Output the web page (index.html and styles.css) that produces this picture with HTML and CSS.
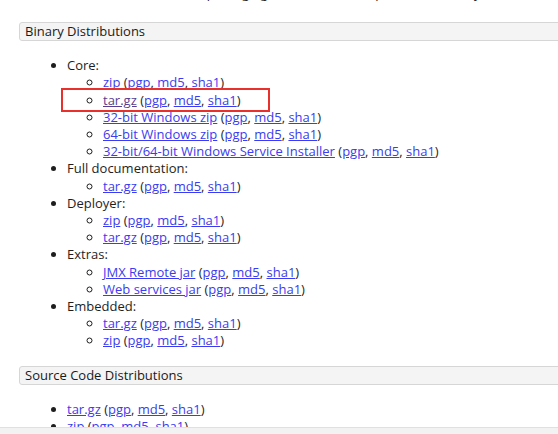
FILE: index.html
```html
<!DOCTYPE html>
<html>
<head>
<meta charset="utf-8">
<link rel="stylesheet" href="styles.css">
</head>
<body>
<div class="page">
  <p class="intro">Please see the <a href="#">README</a> file for packaging information. It explains what every distribution contains.</p>

  <h3 class="section-title">Binary Distributions</h3>
  <ul class="dist">
    <li>Core:
      <ul>
        <li><a href="#">zip</a> (<a href="#">pgp</a>, <a href="#">md5</a>, <a href="#">sha1</a>)</li>
        <li><a href="#" class="visited">tar.gz</a> (<a href="#">pgp</a>, <a href="#">md5</a>, <a href="#">sha1</a>)</li>
        <li><a href="#">32-bit Windows zip</a> (<a href="#">pgp</a>, <a href="#">md5</a>, <a href="#">sha1</a>)</li>
        <li><a href="#">64-bit Windows zip</a> (<a href="#">pgp</a>, <a href="#">md5</a>, <a href="#">sha1</a>)</li>
        <li><a href="#">32-bit/64-bit Windows Service Installer</a> (<a href="#">pgp</a>, <a href="#">md5</a>, <a href="#">sha1</a>)</li>
      </ul>
    </li>
    <li>Full documentation:
      <ul>
        <li><a href="#">tar.gz</a> (<a href="#">pgp</a>, <a href="#">md5</a>, <a href="#">sha1</a>)</li>
      </ul>
    </li>
    <li>Deployer:
      <ul>
        <li><a href="#">zip</a> (<a href="#">pgp</a>, <a href="#">md5</a>, <a href="#">sha1</a>)</li>
        <li><a href="#">tar.gz</a> (<a href="#">pgp</a>, <a href="#">md5</a>, <a href="#">sha1</a>)</li>
      </ul>
    </li>
    <li>Extras:
      <ul>
        <li><a href="#">JMX Remote jar</a> (<a href="#">pgp</a>, <a href="#">md5</a>, <a href="#">sha1</a>)</li>
        <li><a href="#">Web services jar</a> (<a href="#">pgp</a>, <a href="#">md5</a>, <a href="#">sha1</a>)</li>
      </ul>
    </li>
    <li>Embedded:
      <ul>
        <li><a href="#">tar.gz</a> (<a href="#">pgp</a>, <a href="#">md5</a>, <a href="#">sha1</a>)</li>
        <li><a href="#">zip</a> (<a href="#">pgp</a>, <a href="#">md5</a>, <a href="#">sha1</a>)</li>
      </ul>
    </li>
  </ul>

  <h3 class="section-title">Source Code Distributions</h3>
  <ul class="dist">
    <li><a href="#">tar.gz</a> (<a href="#">pgp</a>, <a href="#">md5</a>, <a href="#">sha1</a>)</li>
    <li><a href="#">zip</a> (<a href="#">pgp</a>, <a href="#">md5</a>, <a href="#">sha1</a>)</li>
  </ul>

  <div class="highlight"></div>
</div>
<div class="bottom-bar"></div>
</body>
</html>
```

FILE: styles.css
```css
html, body {
  margin: 0;
  padding: 0;
  background: #ffffff;
  overflow: hidden;
}

body {
  font-family: "Open Sans", "Liberation Sans", sans-serif;
  font-size: 13px;
  line-height: 17.2px;
  color: #1e1e1e;
}

.page {
  position: relative;
  display: flow-root;
}

a {
  color: #3b3bef;
  text-decoration: underline;
}

a.visited {
  color: #5b3d8f;
}

.intro {
  margin: -15px 0 0 19px;
  white-space: nowrap;
}

.section-title {
  margin: 20px -40px 0 19px;
  padding: 0 0 0 5px;
  height: 17px;
  line-height: 17px;
  font-size: 13px;
  font-weight: normal;
  color: #1a1a1a;
  background: #f4f4f4;
  border: 1px solid #d6d6d6;
  border-radius: 3px;
}

.dist {
  margin: 16px 0 0 0;
  padding: 0 0 0 67px;
  list-style: disc;
}

.dist ul {
  margin: 0;
  padding: 0 0 0 36px;
  list-style: circle;
}

.dist + .section-title {
  margin-top: 16px;
}

.highlight {
  position: absolute;
  left: 61px;
  top: 88px;
  width: 205px;
  height: 20px;
  border: 2px solid #e8302c;
}

.bottom-bar {
  position: fixed;
  left: 0;
  right: 0;
  bottom: 0;
  height: 6px;
  background: #f2f2f2;
  border-top: 1px solid #e0e0e0;
}
```
